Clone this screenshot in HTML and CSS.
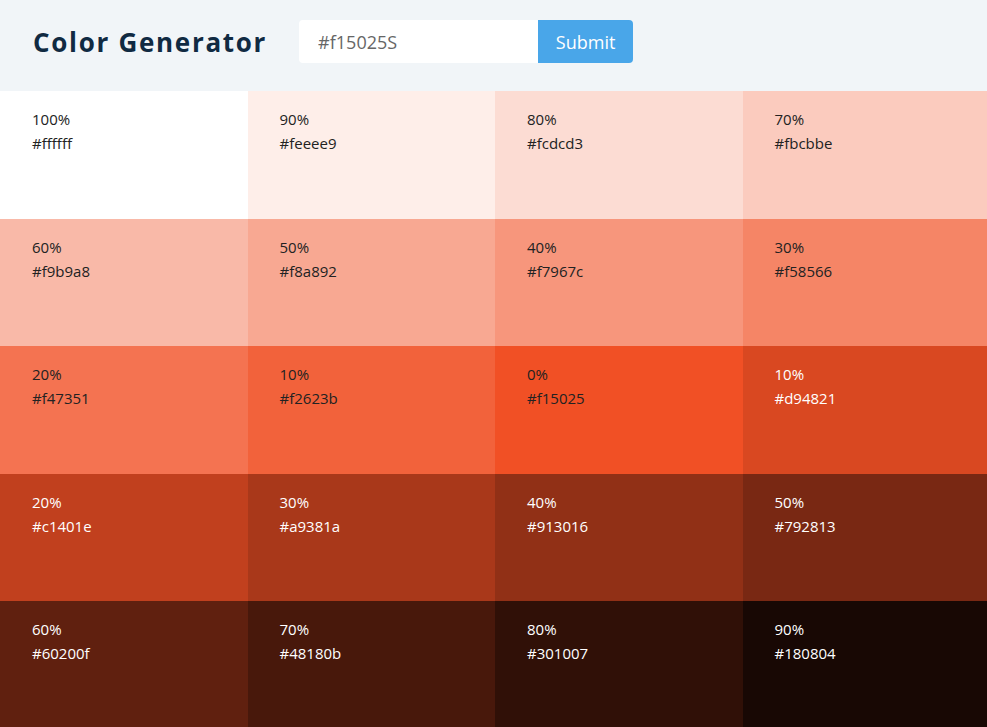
FILE: index.html
```html
<!DOCTYPE html>
<html lang="en">
<head>
<meta charset="utf-8">
<title>Color Generator</title>
<link rel="stylesheet" href="styles.css">
</head>
<body>
<header class="top">
  <h3 class="title">Color Generator</h3>
  <form class="form">
    <input class="field" type="text" value="#f15025S">
    <button class="btn" type="button">Submit</button>
  </form>
</header>
<section class="colors">
  <article class="color" style="background:#ffffff"><p class="pct">100%</p><p class="hex">#ffffff</p></article>
  <article class="color" style="background:#feeee9"><p class="pct">90%</p><p class="hex">#feeee9</p></article>
  <article class="color" style="background:#fcdcd3"><p class="pct">80%</p><p class="hex">#fcdcd3</p></article>
  <article class="color" style="background:#fbcbbe"><p class="pct">70%</p><p class="hex">#fbcbbe</p></article>
  <article class="color" style="background:#f9b9a8"><p class="pct">60%</p><p class="hex">#f9b9a8</p></article>
  <article class="color" style="background:#f8a892"><p class="pct">50%</p><p class="hex">#f8a892</p></article>
  <article class="color" style="background:#f7967c"><p class="pct">40%</p><p class="hex">#f7967c</p></article>
  <article class="color" style="background:#f58566"><p class="pct">30%</p><p class="hex">#f58566</p></article>
  <article class="color" style="background:#f47351"><p class="pct">20%</p><p class="hex">#f47351</p></article>
  <article class="color" style="background:#f2623b"><p class="pct">10%</p><p class="hex">#f2623b</p></article>
  <article class="color" style="background:#f15025"><p class="pct">0%</p><p class="hex">#f15025</p></article>
  <article class="color light" style="background:#d94821"><p class="pct">10%</p><p class="hex">#d94821</p></article>
  <article class="color light" style="background:#c1401e"><p class="pct">20%</p><p class="hex">#c1401e</p></article>
  <article class="color light" style="background:#a9381a"><p class="pct">30%</p><p class="hex">#a9381a</p></article>
  <article class="color light" style="background:#913016"><p class="pct">40%</p><p class="hex">#913016</p></article>
  <article class="color light" style="background:#792813"><p class="pct">50%</p><p class="hex">#792813</p></article>
  <article class="color light" style="background:#60200f"><p class="pct">60%</p><p class="hex">#60200f</p></article>
  <article class="color light" style="background:#48180b"><p class="pct">70%</p><p class="hex">#48180b</p></article>
  <article class="color light" style="background:#301007"><p class="pct">80%</p><p class="hex">#301007</p></article>
  <article class="color light" style="background:#180804"><p class="pct">90%</p><p class="hex">#180804</p></article>
</section>
</body>
</html>
```
FILE: styles.css
```css
* { box-sizing: border-box; }
html, body { margin: 0; padding: 0; }
body {
  font-family: "Open Sans", "Noto Sans", sans-serif;
  background: #f1f5f8;
  color: #222;
  overflow: hidden;
}
.top {
  height: 91px;
  display: flex;
  align-items: center;
  padding: 0 0 8px 33px;
  background: #f1f5f8;
}
.title {
  margin: 0 32px 0 0;
  font-size: 26px;
  font-weight: 700;
  letter-spacing: 1.7px;
  color: #102a42;
}
.form {
  display: flex;
  margin: 0;
}
.field {
  width: 239px;
  height: 43px;
  border: none;
  border-radius: 4px 0 0 4px;
  padding: 0 19px;
  font-family: inherit;
  font-size: 18px;
  color: #666;
  background: #fff;
  outline: none;
}
.btn {
  width: 95px;
  height: 43px;
  border: none;
  border-radius: 0 4px 4px 0;
  background: #49a6e9;
  color: #fff;
  font-family: inherit;
  font-size: 18px;
  padding: 0;
}
.colors {
  display: grid;
  width: 990px;
  grid-template-columns: repeat(4, 1fr);
  grid-auto-rows: 127.5px;
}
.color {
  padding: 16px 32px;
}
.color p {
  margin: 0;
  font-size: 15px;
  line-height: 24px;
}
.light { color: #fff; }
```
